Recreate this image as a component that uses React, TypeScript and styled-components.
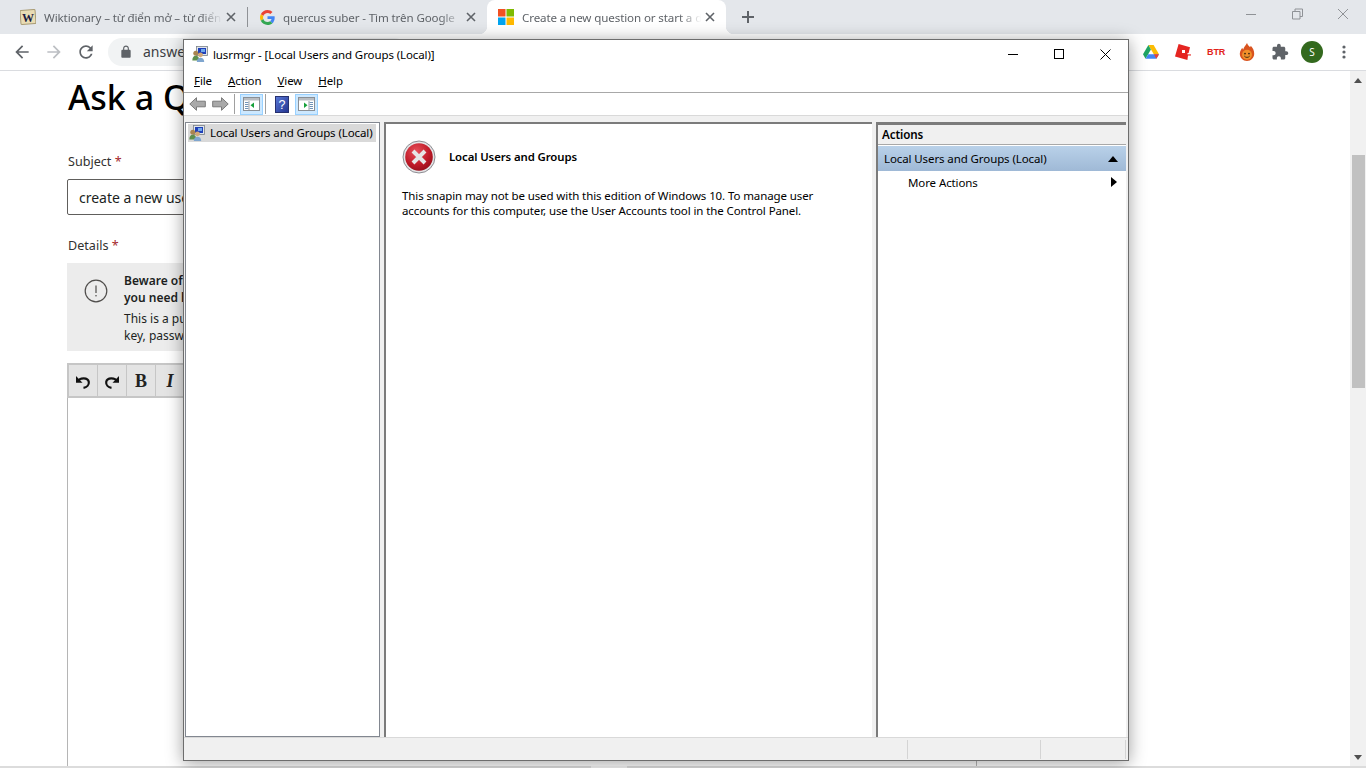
import styled, { createGlobalStyle } from "styled-components";

const FONT = `"Noto Sans", "Open Sans", "Liberation Sans", sans-serif`;

const GlobalStyle = createGlobalStyle`
  html, body {
    margin: 0;
    padding: 0;
    background: #fff;
    font-family: ${FONT};
    overflow: hidden;
  }
  * { box-sizing: border-box; }
`;

const Screen = styled.div`
  position: relative;
  display: flex;
  flex-direction: column;
  width: 1366px;
  height: 768px;
  overflow: hidden;
  background: #fff;
`;

/* browser chrome */

const TabStrip = styled.div`
  flex: none;
  display: flex;
  height: 34px;
  padding-left: 8px;
  background: #e4e7eb;
`;

const Tab = styled.div<{ $active?: boolean }>`
  position: relative;
  display: flex;
  align-items: center;
  flex: none;
  width: 239px;
  height: 34px;
  padding: 0 11px 0 ${({ $active }) => ($active ? 11 : 12)}px;
  ${({ $active }) =>
    $active &&
    `
    background: #fff;
    border-radius: 8px 8px 0 0;
    &::before, &::after {
      content: "";
      position: absolute;
      bottom: 0;
      width: 8px;
      height: 8px;
    }
    &::before {
      left: -8px;
      background: radial-gradient(circle at 0 0, transparent 8px, #fff 8.5px);
    }
    &::after {
      right: -8px;
      background: radial-gradient(circle at 100% 0, transparent 8px, #fff 8.5px);
    }
  `}
`;

const TabDivider = styled.div`
  flex: none;
  align-self: center;
  width: 1px;
  height: 20px;
  background: #8f9296;
`;

const TabTitle = styled.span`
  flex: 1;
  min-width: 0;
  margin-left: 8px;
  white-space: nowrap;
  font-size: 11.6px;
  letter-spacing: -0.12px;
  color: #5f6368;
  -webkit-mask-image: linear-gradient(to right, #000 86%, transparent 98%);
  mask-image: linear-gradient(to right, #000 86%, transparent 98%);
`;

const NewTab = styled.div`
  display: flex;
  align-items: center;
  margin-left: 15px;
`;

const WindowControls = styled.div`
  display: flex;
  align-items: flex-start;
  gap: 30px;
  margin-left: auto;
  padding: 6px 15px 0 0;
`;

const ChromeBar = styled.div`
  flex: none;
  display: flex;
  align-items: center;
  height: 37px;
  padding: 0 20px 1px 12px;
  background: #fff;
  border-bottom: 1px solid #dadce0;
`;

const NavGroup = styled.div`
  display: flex;
  align-items: center;
  gap: 12px;
`;

const Omnibox = styled.div`
  display: flex;
  align-items: center;
  width: 300px;
  height: 28px;
  margin-left: 12px;
  padding-left: 11px;
  border-radius: 14px;
  background: #f1f3f4;
  font-size: 14px;
  color: #3c4043;
`;

const OmniText = styled.span`
  margin-left: 10px;
`;

const Extensions = styled.div`
  display: flex;
  align-items: center;
  margin-left: auto;
  gap: 16px;
`;

const BtrLogo = styled.span`
  width: 16px;
  font-family: "Liberation Sans", sans-serif;
  font-size: 9px;
  font-weight: 700;
  color: #e2231a;
  text-align: center;
  letter-spacing: -0.1px;
`;

const Avatar = styled.div`
  display: flex;
  align-items: center;
  justify-content: center;
  width: 22px;
  height: 22px;
  margin: 0 3px 0 -4px;
  border-radius: 50%;
  background: #33691e;
  color: #fff;
  font-size: 10px;
`;

/* page behind the window */

const PageArea = styled.div`
  flex: 1;
  min-height: 0;
  display: flex;
  overflow: hidden;
`;

const PageBody = styled.div`
  flex: 1;
  min-width: 0;
  padding: 6px 0 0 67px;
  overflow: hidden;
`;

const PageColumn = styled.div`
  width: 910px;
`;

const Heading = styled.h1`
  margin: 0 0 0 1px;
  font-size: 34px;
  line-height: 40px;
  font-weight: 500;
  color: #000;
  white-space: nowrap;
`;

const FieldLabel = styled.div<{ $top: number }>`
  margin-top: ${({ $top }) => $top}px;
  margin-left: 1px;
  font-size: 12.6px;
  line-height: 18px;
  color: #323130;
`;

const Required = styled.span`
  color: #a4262c;
`;

const SubjectInput = styled.div`
  width: 100%;
  height: 36px;
  margin-top: 8px;
  padding: 0 11px;
  border: 1px solid #605e5c;
  border-radius: 2px;
  font-size: 14px;
  line-height: 35px;
  color: #201f1e;
`;

const Notice = styled.div`
  display: flex;
  width: 100%;
  height: 88px;
  margin-top: 8px;
  padding: 9px 0 0 17px;
  background: #ececec;
`;

const NoticeIcon = styled.div`
  flex: none;
  width: 40px;
  padding-top: 7px;
`;

const NoticeText = styled.div`
  font-size: 12px;
  line-height: 17px;
  color: #201f1e;
`;

const NoticeStrong = styled.div`
  font-weight: 600;
  margin-bottom: 4px;
`;

const EditorBox = styled.div`
  width: 100%;
  height: 420px;
  margin-top: 12px;
  border: 1px solid #b5b5b5;
  border-top: none;
`;

const EditorToolbar = styled.div`
  display: flex;
  height: 35px;
  margin-left: -1px;
  margin-right: -1px;
  border: 2px solid #c6c6c6;
  background: #e4e4e4;
`;

const EditorButton = styled.div`
  display: flex;
  align-items: center;
  justify-content: center;
  width: 29px;
  padding-top: 2px;
  border-right: 1px solid #c6c6c6;
`;

const EditorGlyph = styled.span<{ $italic?: boolean }>`
  font-family: "Liberation Serif", serif;
  font-size: 18px;
  font-weight: 700;
  font-style: ${({ $italic }) => ($italic ? "italic" : "normal")};
  color: #222;
`;

const Scrollbar = styled.div`
  flex: none;
  display: flex;
  flex-direction: column;
  align-items: center;
  width: 16px;
  padding-top: 7px;
  background: #f1f1f1;
`;

const ScrollThumb = styled.div`
  width: 13px;
  height: 233px;
  margin-top: 72px;
  background: #c1c1c1;
`;

const ScrollEnd = styled.div`
  margin-top: auto;
  padding-bottom: 6px;
  line-height: 0;
`;

const BottomStrip = styled.div`
  flex: none;
  display: flex;
  height: 2px;
  padding-left: 591px;
  background: #dcdcdc;
`;

const BottomChip = styled.div`
  width: 36px;
  background: #f4f4f4;
`;

/* the mmc window, floating on top of the browser */

const MmcWindow = styled.div`
  position: absolute;
  left: 183px;
  top: 39px;
  display: flex;
  flex-direction: column;
  width: 946px;
  height: 722px;
  background: #fff;
  border: 1px solid #6d6d6d;
  box-shadow: 0 2px 16px rgba(0, 0, 0, 0.38);
  color: #000;
`;

const TitleBar = styled.div`
  flex: none;
  display: flex;
  align-items: center;
  height: 30px;
  padding: 0 0 2px 8px;
  font-size: 11.5px;
  letter-spacing: -0.1px;
`;

const TitleText = styled.span`
  margin-left: 5px;
`;

const TitleButtons = styled.div`
  display: flex;
  margin-left: auto;
`;

const TitleButton = styled.div`
  display: flex;
  align-items: center;
  justify-content: center;
  width: 46px;
  height: 28px;
`;

const MenuBar = styled.div`
  flex: none;
  display: flex;
  align-items: center;
  gap: 16px;
  height: 23px;
  padding: 0 0 1px 10px;
  border-bottom: 1px solid #a8a8a8;
  font-size: 11.5px;
  letter-spacing: -0.1px;
`;

const MenuItem = styled.span`
  &::first-letter {
    text-decoration: underline;
  }
`;

const Toolbar = styled.div`
  flex: none;
  display: flex;
  align-items: center;
  height: 23px;
  padding: 0 0 0 5px;
  border-bottom: 1px solid #d9d9d9;
`;

const ToolSep = styled.div<{ $left: number; $right: number }>`
  width: 1px;
  height: 20px;
  margin: 0 ${({ $right }) => $right}px 0 ${({ $left }) => $left}px;
  background: #a0a0a0;
`;

const ToolGap = styled.div`
  width: 6px;
`;

const ToolToggle = styled.div`
  display: flex;
  align-items: center;
  justify-content: center;
  width: 23px;
  height: 21px;
  background: #cce8ff;
  border: 1px solid #99d1ff;
`;

const Panes = styled.div`
  flex: 1;
  min-height: 0;
  display: flex;
  padding: 6px 1px 0 1px;
  background: #f0f0f0;
  gap: 4px;
`;

const TreePane = styled.div`
  flex: none;
  width: 195px;
  padding: 1px 3px 0 2px;
  background: #fff;
  border: 1px solid #828790;
`;

const TreeRow = styled.div`
  display: flex;
  align-items: center;
  height: 18px;
  padding: 0 0 1px 1px;
  background: #d9d9d9;
  font-size: 11.5px;
  letter-spacing: -0.1px;
  white-space: nowrap;
`;

const TreeLabel = styled.span`
  margin-left: 5px;
`;

const ResultPane = styled.div`
  flex: none;
  width: 488px;
  padding: 16px 16px 0 16px;
  background: #fff;
  border-left: 2px solid #7b7b7b;
  border-top: 2px solid #7b7b7b;
`;

const ErrorHead = styled.div`
  display: flex;
  align-items: center;
  gap: 13px;
  height: 34px;
`;

const ErrorTitle = styled.div`
  padding-bottom: 2px;
  font-size: 11.4px;
  font-weight: 600;
  letter-spacing: -0.1px;
`;

const ErrorBody = styled.p`
  margin: 14px 0 0 0;
  font-size: 11.5px;
  line-height: 15px;
  letter-spacing: -0.1px;
  width: 440px;
`;

const ActionsPane = styled.div`
  flex: 1;
  min-width: 0;
  background: #fff;
  border-top: 3px solid #7b7b7b;
  border-left: 2px solid #7b7b7b;
  margin-right: 1px;
`;

const ActionsHeader = styled.div`
  height: 20px;
  padding-left: 4px;
  background: #f0f0f0;
  border-bottom: 1px solid #a8a8a8;
  font-size: 11.6px;
  font-weight: 600;
  letter-spacing: -0.1px;
  line-height: 20px;
`;

const ActionsSection = styled.div`
  display: flex;
  align-items: center;
  justify-content: space-between;
  height: 25px;
  margin-top: 1px;
  padding: 0 8px 0 6px;
  background: linear-gradient(#b9d1e9, #9fb9d6);
  font-size: 11.5px;
  letter-spacing: -0.1px;
`;

const ActionRow = styled.div`
  display: flex;
  align-items: center;
  justify-content: space-between;
  height: 24px;
  padding: 0 9px 2px 30px;
  font-size: 11.5px;
  letter-spacing: -0.1px;
`;

const StatusBar = styled.div`
  flex: none;
  display: flex;
  justify-content: flex-end;
  height: 23px;
  padding: 2px 1px 1px 0;
  background: #f0f0f0;
  border-top: 1px solid #d9d9d9;
`;

const StatusCell = styled.div<{ $width: number }>`
  width: ${({ $width }) => $width}px;
  border-left: 1px solid #d4d4d4;
`;

/* drawings */

const WiktionaryIcon = () => (
  <svg width="16" height="16" viewBox="0 0 16 16">
    <rect x="0.5" y="1" width="15" height="14" rx="1" fill="#e9dcb4" stroke="#a89b74" transform="rotate(-4 8 8)" />
    <text x="8" y="12.5" textAnchor="middle" fontFamily="Liberation Serif" fontSize="12" fontWeight="700" fill="#1c1c40">
      W
    </text>
  </svg>
);

const GoogleIcon = () => (
  <svg width="15" height="15" viewBox="0 0 48 48">
    <path fill="#EA4335" d="M24 9.5c3.54 0 6.71 1.22 9.21 3.6l6.85-6.85C35.9 2.38 30.47 0 24 0 14.62 0 6.51 5.38 2.56 13.22l7.98 6.19C12.43 13.72 17.74 9.5 24 9.5z" />
    <path fill="#4285F4" d="M46.98 24.55c0-1.57-.15-3.09-.38-4.55H24v9.02h12.94c-.58 2.96-2.26 5.48-4.78 7.18l7.73 6c4.51-4.18 7.09-10.36 7.09-17.65z" />
    <path fill="#FBBC05" d="M10.53 28.59c-.48-1.45-.76-2.99-.76-4.59s.27-3.14.76-4.59l-7.98-6.19C.92 16.46 0 20.12 0 24c0 3.88.92 7.54 2.56 10.78l7.97-6.19z" />
    <path fill="#34A853" d="M24 48c6.48 0 11.93-2.13 15.89-5.81l-7.73-6c-2.15 1.45-4.92 2.3-8.16 2.3-6.26 0-11.57-4.22-13.47-9.91l-7.98 6.19C6.51 42.62 14.62 48 24 48z" />
  </svg>
);

const MicrosoftIcon = () => (
  <svg width="16" height="16" viewBox="0 0 16 16">
    <rect width="7.5" height="7.5" fill="#f25022" />
    <rect x="8.5" width="7.5" height="7.5" fill="#7fba00" />
    <rect y="8.5" width="7.5" height="7.5" fill="#00a4ef" />
    <rect x="8.5" y="8.5" width="7.5" height="7.5" fill="#ffb900" />
  </svg>
);

const TabClose = () => (
  <svg width="10" height="10" viewBox="0 0 10 10" stroke="#5f6368" strokeWidth="1.6">
    <path d="M1 1l8 8M9 1l-8 8" />
  </svg>
);

const MaterialIcon = ({ d, fill = "#5f6368", size = 20 }: { d: string; fill?: string; size?: number }) => (
  <svg width={size} height={size} viewBox="0 0 24 24" fill={fill}>
    <path d={d} />
  </svg>
);

const ARROW_BACK = "M20 11H7.83l5.59-5.59L12 4l-8 8 8 8 1.41-1.41L7.83 13H20v-2z";
const ARROW_FORWARD = "M4 11h12.17l-5.59-5.59L12 4l8 8-8 8-1.41-1.41L16.17 13H4v-2z";
const RELOAD =
  "M17.65 6.35C16.2 4.9 14.21 4 12 4c-4.42 0-7.99 3.58-7.99 8s3.57 8 7.99 8c3.73 0 6.84-2.55 7.73-6h-2.08c-.82 2.33-3.04 4-5.65 4-3.31 0-6-2.69-6-6s2.69-6 6-6c1.66 0 3.14.69 4.22 1.78L13 11h7V4l-2.35 2.35z";
const PUZZLE =
  "M20.5 11H19V7c0-1.1-.9-2-2-2h-4V3.5C13 2.12 11.88 1 10.5 1S8 2.12 8 3.5V5H4c-1.1 0-1.99.9-1.99 2v3.8H3.5c1.49 0 2.7 1.21 2.7 2.7s-1.21 2.7-2.7 2.7H2V20c0 1.1.9 2 2 2h3.8v-1.5c0-1.49 1.21-2.7 2.7-2.7 1.49 0 2.7 1.21 2.7 2.7V22H17c1.1 0 2-.9 2-2v-4h1.5c1.38 0 2.5-1.12 2.5-2.5S21.88 11 20.5 11z";
const LOCK =
  "M18 8h-1V6c0-2.76-2.24-5-5-5S7 3.24 7 6v2H6c-1.1 0-2 .9-2 2v10c0 1.1.9 2 2 2h12c1.1 0 2-.9 2-2V10c0-1.1-.9-2-2-2zM9 6c0-1.66 1.34-3 3-3s3 1.34 3 3v2H9V6z";

const DriveIcon = () => (
  <svg width="16" height="14" viewBox="0 0 16 14">
    <path d="M5.4 0h5.2l5.4 9.2h-5.2z" fill="#fbbc04" />
    <path d="M5.4 0L0 9.2l2.6 4.6 5.3-9.2z" fill="#1fa463" />
    <path d="M5.2 9.2H16l-2.6 4.6H2.6z" fill="#4285f4" />
    <path d="M16 9.2l-2.6 4.6-2.6-4.6z" fill="#ea4335" />
  </svg>
);

const RobloxIcon = () => (
  <svg width="16" height="16" viewBox="0 0 16 16">
    <path d="M3.6 0L15 3.2l-1.400 5.800h2.400v2.500h-3L12.400 16 0 12.600z" fill="#e52521" />
    <rect x="7" y="6" width="3" height="3" fill="#fff" />
    <rect x="12.500" y="9" width="3.500" height="1.400" fill="#fff" />
  </svg>
);

const FireIcon = () => (
  <svg width="16" height="18" viewBox="0 0 16 20">
    <path d="M8 0c1 3 2 3 3.400 4.800.4-.8.6-1 .8-1.800C14.500 5.500 16 8 16 12c0 4.500-3.500 8-8 8s-8-3.500-8-8c0-3 1.500-5 2.800-6.800.2 1 .4 1.400 1 2C4.500 4.500 6.500 3 8 0z" fill="#d9531e" />
    <circle cx="8" cy="13" r="5.500" fill="#f0902a" />
    <circle cx="5.800" cy="11.800" r="1" fill="#3a2410" />
    <circle cx="10.200" cy="11.800" r="1" fill="#3a2410" />
    <path d="M5 14.500c1.500 2 4.500 2 6 0" stroke="#3a2410" strokeWidth="1" fill="none" />
  </svg>
);

const MoreIcon = () => (
  <svg width="4" height="14" viewBox="0 0 4 14" fill="#5f6368">
    <circle cx="2" cy="2" r="1.600" />
    <circle cx="2" cy="7" r="1.600" />
    <circle cx="2" cy="12" r="1.600" />
  </svg>
);

const AlertCircle = () => (
  <svg width="24" height="24" viewBox="0 0 24 24" fill="none">
    <circle cx="12" cy="12" r="10.800" stroke="#4f4d4b" strokeWidth="1.200" />
    <path d="M12 6.500v7.500" stroke="#4f4d4b" strokeWidth="1.200" />
    <circle cx="12" cy="16.800" r="0.800" fill="#4f4d4b" />
  </svg>
);

const UndoIcon = ({ flip }: { flip?: boolean }) => (
  <svg width="16" height="15" viewBox="0 0 16 15" fill="none" style={flip ? { transform: "scaleX(-1)" } : undefined}>
    <path d="M3 7.500C4.500 3.500 13 3 13.800 8c.4 3-2 5.300-5.300 5.800" stroke="#111" strokeWidth="2.200" />
    <path d="M1 2v6.800h6.500z" fill="#111" />
  </svg>
);

const MmcUsersIcon = () => (
  <svg width="16" height="16" viewBox="0 0 16 16">
    <rect x="4.500" y="0.500" width="11" height="9" fill="#dfe4ea" stroke="#7b8088" strokeWidth="0.800" />
    <rect x="6" y="2" width="8" height="6" fill="#1f3fb8" />
    <rect x="9" y="3" width="4" height="3" fill="#6fa8ec" />
    <circle cx="3.800" cy="7.200" r="2.500" fill="#a9844f" />
    <path d="M0.300 14.500c0-3 1.300-4.800 3.500-4.800s3.500 1.800 3.500 4.800z" fill="#5e8f4c" />
    <circle cx="8.500" cy="8.800" r="2.400" fill="#d2a878" />
    <path d="M4.800 16c0-2.800 1.500-4.300 3.700-4.300s3.700 1.500 3.700 4.300z" fill="#7fa6cf" />
  </svg>
);

const NavArrow = ({ flip }: { flip?: boolean }) => (
  <svg width="17" height="14" viewBox="0 0 17 14" style={flip ? { transform: "scaleX(-1)" } : undefined}>
    <path d="M7.500 0.700L0.800 7l6.700 6.300V9.800h8.800V4.200H7.500z" fill="#a9a9a9" stroke="#7a7a7a" strokeWidth="1" />
  </svg>
);

const PaneToggleIcon = ({ right }: { right?: boolean }) => (
  <svg width="17" height="14" viewBox="0 0 17 14">
    <rect x="0.500" y="0.500" width="16" height="13" fill="#fff" stroke="#8a8f95" />
    <rect x="1" y="1" width="15" height="2.500" fill="#b9bdc2" />
    {right ? (
      <>
        <path d="M6 5.500l3.500 2.700L6 11z" fill="#16a03a" />
        <path d="M11.500 5.500h3.500M11.500 7.500h3.500M11.500 9.500h3.500M11.500 11.500h3.500" stroke="#6f93b8" />
        <path d="M11 4v9" stroke="#9ba0a6" />
      </>
    ) : (
      <>
        <path d="M11 5.500L7.500 8.200 11 11z" fill="#16a03a" />
        <path d="M2 5.500h3.500M2 7.500h3.500M2 9.500h3.500M2 11.500h3.500" stroke="#6f93b8" />
        <path d="M6 4v9" stroke="#9ba0a6" />
      </>
    )}
  </svg>
);

const HelpBookIcon = () => (
  <svg width="14" height="17" viewBox="0 0 14 17">
    <defs>
      <linearGradient id="help-book" x1="0" y1="0" x2="1" y2="1">
        <stop offset="0" stopColor="#5a79d8" />
        <stop offset="1" stopColor="#22338f" />
      </linearGradient>
    </defs>
    <rect x="0.500" y="0.500" width="13" height="16" fill="url(#help-book)" stroke="#26306f" />
    <text x="7" y="13" textAnchor="middle" fontFamily="Liberation Sans" fontSize="12.500" fill="#fff">
      ?
    </text>
  </svg>
);

const ErrorBadge = () => (
  <svg width="34" height="34" viewBox="0 0 34 34">
    <defs>
      <radialGradient id="err-fill" cx="0.400" cy="0.300" r="0.800">
        <stop offset="0" stopColor="#e8505a" />
        <stop offset="0.600" stopColor="#bf1a28" />
        <stop offset="1" stopColor="#8c0d18" />
      </radialGradient>
    </defs>
    <circle cx="17" cy="17" r="16" fill="#e4e4e6" stroke="#8d8d92" strokeWidth="1" />
    <circle cx="17" cy="17" r="13.800" fill="url(#err-fill)" />
    <path d="M11 11l12 12M23 11L11 23" stroke="#e6e6e6" strokeWidth="4" />
  </svg>
);

const CaretUp = () => (
  <svg width="10" height="6" viewBox="0 0 10 6">
    <path d="M5 0l5 6H0z" fill="#000" />
  </svg>
);

const CaretRight = () => (
  <svg width="6" height="10" viewBox="0 0 6 10">
    <path d="M0 0l6 5-6 5z" fill="#000" />
  </svg>
);

const ScrollCaret = ({ down }: { down?: boolean }) => (
  <svg width="8" height="5" viewBox="0 0 8 5">
    <path d={down ? "M0 0h8L4 5z" : "M4 0l4 5H0z"} fill="#505050" />
  </svg>
);

const App = () => (
  <>
    <GlobalStyle />
    <Screen>
      <TabStrip>
        <Tab>
          <WiktionaryIcon />
          <TabTitle>Wiktionary – từ điển mở – từ điển</TabTitle>
          <TabClose />
        </Tab>
        <TabDivider />
        <Tab>
          <GoogleIcon />
          <TabTitle>quercus suber - Tìm trên Google</TabTitle>
          <TabClose />
        </Tab>
        <Tab $active>
          <MicrosoftIcon />
          <TabTitle>Create a new question or start a d</TabTitle>
          <TabClose />
        </Tab>
        <NewTab>
          <svg width="14" height="14" viewBox="0 0 14 14" stroke="#5f6368" strokeWidth="2">
            <path d="M7 1v12M1 7h12" />
          </svg>
        </NewTab>
        <WindowControls>
          <svg width="16" height="16" viewBox="0 0 16 16" stroke="#8f9296" fill="none">
            <path d="M3 8.500h10" />
          </svg>
          <svg width="16" height="16" viewBox="0 0 16 16" stroke="#8f9296" fill="none">
            <path d="M3.500 5.500h7.500v7.500H3.500zM6 5.500V3h7.500v7.500H11" />
          </svg>
          <svg width="16" height="16" viewBox="0 0 16 16" stroke="#8f9296" fill="none">
            <path d="M3 3l10 10M13 3L3 13" />
          </svg>
        </WindowControls>
      </TabStrip>

      <ChromeBar>
        <NavGroup>
          <MaterialIcon d={ARROW_BACK} />
          <MaterialIcon d={ARROW_FORWARD} fill="#bcbfc3" />
          <MaterialIcon d={RELOAD} />
        </NavGroup>
        <Omnibox>
          <MaterialIcon d={LOCK} size={14} />
          <OmniText>answers.microsoft.com</OmniText>
        </Omnibox>
        <Extensions>
          <DriveIcon />
          <RobloxIcon />
          <BtrLogo>BTR</BtrLogo>
          <FireIcon />
          <MaterialIcon d={PUZZLE} size={18} />
          <Avatar>S</Avatar>
          <MoreIcon />
        </Extensions>
      </ChromeBar>

      <PageArea>
        <PageBody>
          <PageColumn>
            <Heading>Ask a Question</Heading>
            <FieldLabel $top={36}>
              Subject <Required>*</Required>
            </FieldLabel>
            <SubjectInput>create a new user</SubjectInput>
            <FieldLabel $top={22}>
              Details <Required>*</Required>
            </FieldLabel>
            <Notice>
              <NoticeIcon>
                <AlertCircle />
              </NoticeIcon>
              <NoticeText>
                <NoticeStrong>
                  Beware of scams
                  <br />
                  you need help
                </NoticeStrong>
                This is a public forum
                <br />
                key, password
              </NoticeText>
            </Notice>
            <EditorBox>
              <EditorToolbar>
                <EditorButton>
                  <UndoIcon />
                </EditorButton>
                <EditorButton>
                  <UndoIcon flip />
                </EditorButton>
                <EditorButton>
                  <EditorGlyph>B</EditorGlyph>
                </EditorButton>
                <EditorButton>
                  <EditorGlyph $italic>I</EditorGlyph>
                </EditorButton>
              </EditorToolbar>
            </EditorBox>
          </PageColumn>
        </PageBody>
        <Scrollbar>
          <ScrollCaret />
          <ScrollThumb />
          <ScrollEnd>
            <ScrollCaret down />
          </ScrollEnd>
        </Scrollbar>
      </PageArea>
      <BottomStrip>
        <BottomChip />
      </BottomStrip>

      <MmcWindow>
        <TitleBar>
          <MmcUsersIcon />
          <TitleText>lusrmgr - [Local Users and Groups (Local)]</TitleText>
          <TitleButtons>
            <TitleButton>
              <svg width="10" height="10" viewBox="0 0 10 10" stroke="#000" fill="none">
                <path d="M0 5.500h10" />
              </svg>
            </TitleButton>
            <TitleButton>
              <svg width="10" height="10" viewBox="0 0 10 10" stroke="#000" fill="none">
                <rect x="0.500" y="0.500" width="9" height="9" />
              </svg>
            </TitleButton>
            <TitleButton>
              <svg width="11" height="11" viewBox="0 0 11 11" stroke="#000" fill="none">
                <path d="M0.500 0.500l10 10M10.500 0.500l-10 10" />
              </svg>
            </TitleButton>
          </TitleButtons>
        </TitleBar>
        <MenuBar>
          <MenuItem>File</MenuItem>
          <MenuItem>Action</MenuItem>
          <MenuItem>View</MenuItem>
          <MenuItem>Help</MenuItem>
        </MenuBar>
        <Toolbar>
          <NavArrow />
          <ToolGap />
          <NavArrow flip />
          <ToolSep $left={5} $right={5} />
          <ToolToggle>
            <PaneToggleIcon />
          </ToolToggle>
          <ToolSep $left={2} $right={9} />
          <HelpBookIcon />
          <ToolGap />
          <ToolToggle>
            <PaneToggleIcon right />
          </ToolToggle>
        </Toolbar>
        <Panes>
          <TreePane>
            <TreeRow>
              <MmcUsersIcon />
              <TreeLabel>Local Users and Groups (Local)</TreeLabel>
            </TreeRow>
          </TreePane>
          <ResultPane>
            <ErrorHead>
              <ErrorBadge />
              <ErrorTitle>Local Users and Groups</ErrorTitle>
            </ErrorHead>
            <ErrorBody>
              This snapin may not be used with this edition of Windows 10. To manage user accounts for this computer,
              use the User Accounts tool in the Control Panel.
            </ErrorBody>
          </ResultPane>
          <ActionsPane>
            <ActionsHeader>Actions</ActionsHeader>
            <ActionsSection>
              Local Users and Groups (Local)
              <CaretUp />
            </ActionsSection>
            <ActionRow>
              More Actions
              <CaretRight />
            </ActionRow>
          </ActionsPane>
        </Panes>
        <StatusBar>
          <StatusCell $width={133} />
          <StatusCell $width={85} />
          <StatusCell $width={2} />
        </StatusBar>
      </MmcWindow>
    </Screen>
  </>
);

export default App;
